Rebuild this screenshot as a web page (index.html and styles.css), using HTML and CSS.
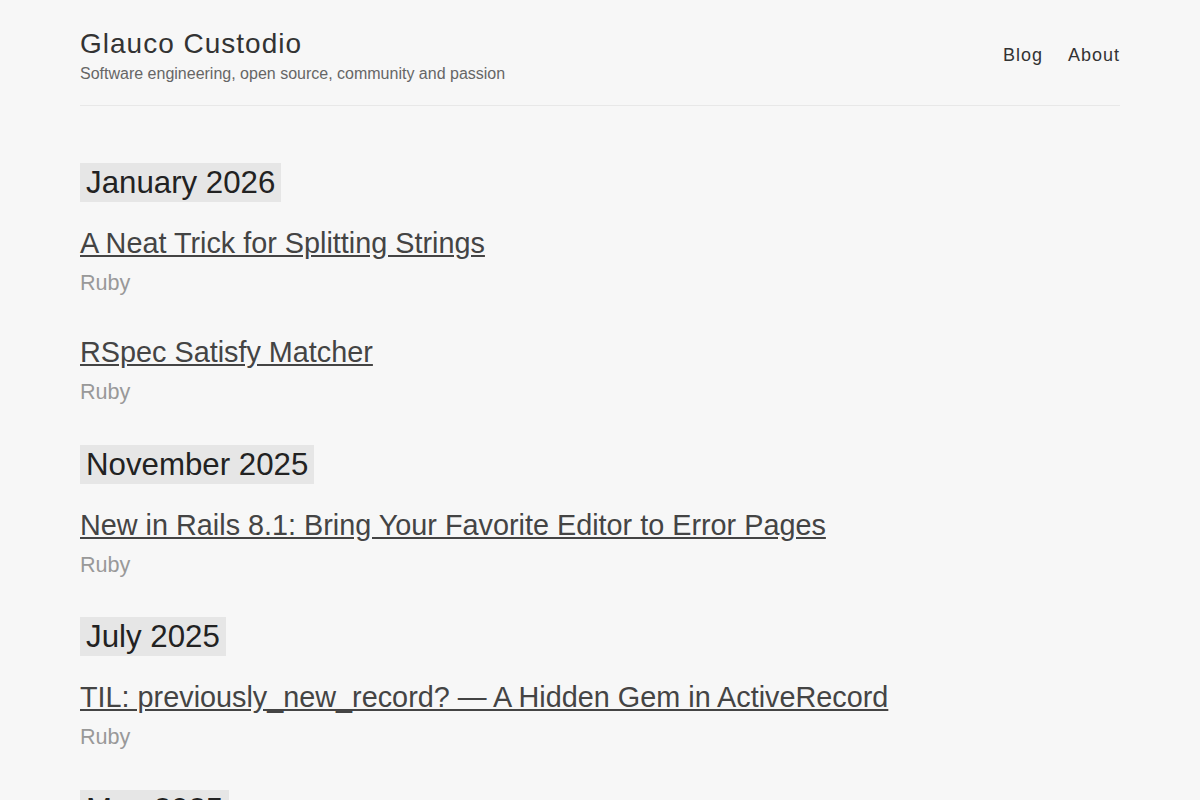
FILE: index.html
```html
<!DOCTYPE html>
<html lang="en">
<head>
    <meta charset="UTF-8">
    <meta name="viewport" content="width=device-width, initial-scale=1.0">
    <title>Glauco Custodio</title>
    <link rel="stylesheet" href="styles.css">
</head>
<body>
    <div class="wrapper">
        <!-- Site header -->
        <header class="site-header">
            <div class="brand">
                <a href="#" class="site-title">Glauco Custodio</a>
                <p class="site-description">Software engineering, open source, community and passion</p>
            </div>
            <nav class="site-nav">
                <a href="#">Blog</a>
                <a href="#">About</a>
            </nav>
        </header>

        <!-- Posts grouped by month -->
        <main class="archive">
            <section class="month">
                <h2 class="month-title">January 2026</h2>
                <div class="post">
                    <a href="#" class="post-title">A Neat Trick for Splitting Strings</a>
                    <div class="post-meta">Ruby</div>
                </div>
                <div class="post">
                    <a href="#" class="post-title">RSpec Satisfy Matcher</a>
                    <div class="post-meta">Ruby</div>
                </div>
            </section>

            <section class="month">
                <h2 class="month-title">November 2025</h2>
                <div class="post">
                    <a href="#" class="post-title">New in Rails 8.1: Bring Your Favorite Editor to Error Pages</a>
                    <div class="post-meta">Ruby</div>
                </div>
            </section>

            <section class="month">
                <h2 class="month-title">July 2025</h2>
                <div class="post">
                    <a href="#" class="post-title">TIL: previously_new_record? — A Hidden Gem in ActiveRecord</a>
                    <div class="post-meta">Ruby</div>
                </div>
            </section>

            <section class="month">
                <h2 class="month-title">May 2025</h2>
                <div class="post">
                    <a href="#" class="post-title">Ruby Data Objects</a>
                    <div class="post-meta">Ruby</div>
                </div>
            </section>
        </main>
    </div>
</body>
</html>
```

FILE: styles.css
```css
body {
    font-family: "Liberation Sans", Arial, sans-serif;
    margin: 0;
    padding: 0;
    background-color: #f7f7f7;
    color: #333;
}

.wrapper {
    max-width: 1040px;
    margin: 0 auto;
    padding: 0 80px;
}

/* Header */
.site-header {
    display: flex;
    justify-content: space-between;
    align-items: center;
    padding: 26px 0 19px;
    border-bottom: 1px solid #e8e8e8;
}

.site-title {
    display: block;
    font-size: 28px;
    line-height: 35px;
    letter-spacing: 1px;
    color: #333;
    text-decoration: none;
}

.site-description {
    margin: 1px 0 0;
    font-size: 16px;
    line-height: 24px;
    color: #666;
}

.site-nav {
    display: flex;
    gap: 25px;
    margin-bottom: 2px;
}

.site-nav a {
    font-size: 18px;
    line-height: 27px;
    letter-spacing: 1px;
    color: #333;
    text-decoration: none;
}

/* Archive */
.archive {
    padding-top: 57px;
}

.month + .month {
    padding-top: 1.5px;
}

.month-title {
    display: inline-block;
    margin: 0 0 23px;
    padding: 0 6px;
    font-size: 31.25px;
    font-weight: normal;
    line-height: 39px;
    color: #222;
    background-color: #e6e6e6;
}

.post {
    margin-bottom: 35px;
}

.post-title {
    display: inline-block;
    font-size: 28.8px;
    line-height: 36px;
    color: #444;
}

.post-meta {
    margin-top: 6px;
    font-size: 21.6px;
    line-height: 32px;
    color: #999;
}
```
